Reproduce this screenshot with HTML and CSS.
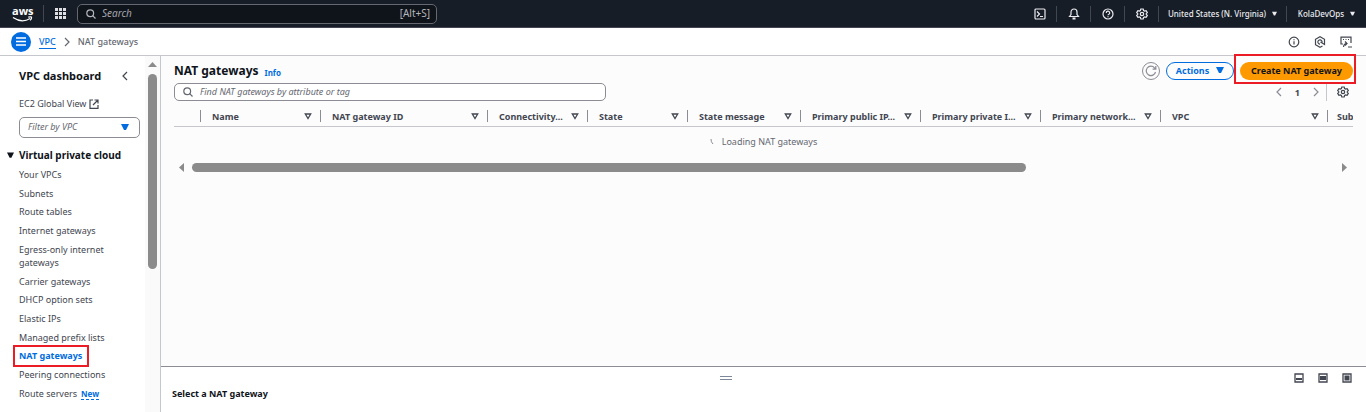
FILE: index.html
```html
<!DOCTYPE html>
<html lang="en">
<head>
<meta charset="utf-8">
<title>NAT gateways | VPC Console</title>
<link rel="stylesheet" href="styles.css">
</head>
<body>
<svg class="sprite" aria-hidden="true">
  <symbol id="search" viewBox="0 0 10 10"><circle cx="4.2" cy="4.2" r="3.4"/><path d="M6.7 6.7 9.5 9.5"/></symbol>
  <symbol id="gear" viewBox="0 0 12 12"><path d="M4.8 1h2.4l.4 1.5 1 .6 1.5-.5 1.2 2-1.1 1.1v.6l1.1 1.1-1.2 2-1.5-.5-1 .6L7.2 11H4.8l-.4-1.500-1-.6-1.500.5-1.200-2 1.100-1.100v-.6L.7 4.600l1.200-2 1.500.5 1-.6z"/><circle cx="6" cy="6" r="1.700"/></symbol>
  <symbol id="caret" viewBox="0 0 8 6"><path d="M0 0h8L5 6H3z"/></symbol>
  <symbol id="sort" viewBox="0 0 8 7"><path d="M1.300 1h5.400L4 5.500z"/></symbol>
  <symbol id="right" viewBox="0 0 6 10"><path d="M1 1l4 4-4 4"/></symbol>
  <symbol id="left" viewBox="0 0 6 10"><path d="M5 1 1 5l4 4"/></symbol>
</svg>
<div class="app">
  <header class="topbar">
    <a class="logo" href="#" aria-label="aws">
      <span>aws</span>
      <svg viewBox="0 0 22 6" class="smile"><path d="M1 1.500c6 4 13 4 18 1"/><path d="M17 1c2-.5 3.500-.3 3.500.3S20 3.500 19 4.500"/></svg>
    </a>
    <button class="apps" aria-label="Services"><svg viewBox="0 0 11 11"><path d="M0 0h3v3H0zM4 0h3v3H4zM8 0h3v3H8zM0 4h3v3H0zM4 4h3v3H4zM8 4h3v3H8zM0 8h3v3H0zM4 8h3v3H4zM8 8h3v3H8z"/></svg></button>
    <label class="top-search"><svg class="line i10"><use href="#search"/></svg><input type="text" placeholder="Search" aria-label="Search"><span>[Alt+S]</span></label>
    <nav class="tools">
      <button class="tool" aria-label="CloudShell"><svg class="line i12" viewBox="0 0 12 12"><rect x="1" y="1" width="10" height="10" rx="1"/><path d="M3 3.500 5.500 6 3 8.500M6 8.500h3"/></svg></button>
      <button class="tool" aria-label="Notifications"><svg class="line i12" viewBox="0 0 12 12"><path d="M1.500 8.500 3 6.500V4a3 3 0 0 1 6 0v2.500l1.500 2z"/><path d="M4.500 10.500h3" stroke-width="2"/></svg></button>
      <button class="tool" aria-label="Help"><svg class="line i12" viewBox="0 0 12 12"><circle cx="6" cy="6" r="5"/><path d="M4.300 5a1.700 1.700 0 1 1 2.500 1.300Q6 6.700 6 7.300M6 8.200v1"/></svg></button>
      <button class="tool" aria-label="Settings"><svg class="line i12"><use href="#gear"/></svg></button>
      <button class="tool region">United States (N. Virginia)<svg class="fill"><use href="#caret"/></svg></button>
      <button class="tool user">KolaDevOps<svg class="fill"><use href="#caret"/></svg></button>
    </nav>
  </header>
  <div class="crumbs">
    <button class="burger" aria-label="Toggle navigation"><svg viewBox="0 0 10 9"><path d="M0 1h10M0 4.500h10M0 8h10"/></svg></button>
    <a href="#">VPC</a>
    <svg class="line chevron"><use href="#right"/></svg>
    <span>NAT gateways</span>
    <div class="page-tools">
      <button aria-label="Info"><svg class="line i12" viewBox="0 0 12 12"><circle cx="6" cy="6" r="4.800"/><path d="M6 5.200v3.300M6 3.200v1"/></svg></button>
      <button aria-label="Diagnostics"><svg class="line i12" viewBox="0 0 12 12"><path d="M8.500 10 6 11.200 1.500 8.700V3.300L6 .8l4.500 2.500v5.200L6.500 6"/><path d="M8 6.500A2.100 2.100 0 1 0 6 8.100"/></svg></button>
      <button aria-label="Console"><svg class="line i12" viewBox="0 0 12 12"><path d="M3 8H1V1.200h10V7M3 3.500h1M5.500 3.500h1M8 3.500h1M8 11h4M3.500 11Q4 7.500 6.500 7.500M5 5.500l2 2-2 2"/></svg></button>
    </div>
  </div>
  <div class="body">
    <aside class="sidebar">
      <div class="side-content">
        <div class="side-title"><h2>VPC dashboard</h2><button aria-label="Collapse"><svg class="line chevron"><use href="#left"/></svg></button></div>
        <a class="global" href="#">EC2 Global View<svg class="line i10" viewBox="0 0 10 10"><path d="M4 1H1v8.300h8V6M5.500 1H9v3.500M9 1 4 6"/></svg></a>
        <button class="filter"><i>Filter by VPC</i><svg class="fill"><use href="#caret"/></svg></button>
        <h3><svg class="fill"><use href="#caret"/></svg>Virtual private cloud</h3>
        <ul>
          <li><a href="#">Your VPCs</a></li>
          <li><a href="#">Subnets</a></li>
          <li><a href="#">Route tables</a></li>
          <li><a href="#">Internet gateways</a></li>
          <li><a href="#">Egress-only internet<br>gateways</a></li>
          <li><a href="#">Carrier gateways</a></li>
          <li><a href="#">DHCP option sets</a></li>
          <li><a href="#">Elastic IPs</a></li>
          <li><a href="#">Managed prefix lists</a></li>
          <li class="current"><a href="#">NAT gateways</a></li>
          <li><a href="#">Peering connections</a></li>
          <li><a href="#">Route servers</a><span class="new">New</span></li>
        </ul>
      </div>
      <div class="vscroll"><svg viewBox="0 0 9 5"><path d="M0 5 4.500 0 9 5z"/></svg><div class="vthumb"></div></div>
    </aside>
    <div class="right">
      <main>
        <div class="title-row">
          <h1>NAT gateways</h1><a class="info" href="#">Info</a>
          <div class="actions">
            <button class="refresh" aria-label="Refresh"><svg class="line" viewBox="0 0 12 12"><path d="M10.500 7A4.700 4.700 0 1 1 9.500 2.800l1 1M10.800 1v3.200H7.600"/></svg></button>
            <button class="pill">Actions<svg class="fill"><use href="#caret"/></svg></button>
            <span class="marked"><button class="primary">Create NAT gateway</button></span>
          </div>
        </div>
        <div class="filter-row">
          <label class="find"><svg class="line i10"><use href="#search"/></svg><input type="text" placeholder="Find NAT gateways by attribute or tag" aria-label="Find NAT gateways"></label>
          <div class="pager">
            <button aria-label="Previous"><svg class="line chevron"><use href="#left"/></svg></button><b>1</b><button aria-label="Next"><svg class="line chevron"><use href="#right"/></svg></button>
            <button class="prefs" aria-label="Preferences"><svg class="line i12"><use href="#gear"/></svg></button>
          </div>
        </div>
        <div class="table-wrap">
          <table>
            <colgroup><col class="w-check"><col class="w-120"><col class="w-167"><col class="w-100"><col class="w-100"><col class="w-113"><col class="w-120"><col class="w-120"><col class="w-120"><col class="w-167"><col></colgroup>
            <thead><tr>
              <th></th>
              <th><div>Name<svg><use href="#sort"/></svg></div></th>
              <th><div>NAT gateway ID<svg><use href="#sort"/></svg></div></th>
              <th><div>Connectivity...<svg><use href="#sort"/></svg></div></th>
              <th><div>State<svg><use href="#sort"/></svg></div></th>
              <th><div>State message<svg><use href="#sort"/></svg></div></th>
              <th><div>Primary public IP...<svg><use href="#sort"/></svg></div></th>
              <th><div>Primary private I...<svg><use href="#sort"/></svg></div></th>
              <th><div>Primary network...<svg><use href="#sort"/></svg></div></th>
              <th><div>VPC<svg><use href="#sort"/></svg></div></th>
              <th><div>Sub</div></th>
            </tr></thead>
          </table>
        </div>
        <div class="loading"><svg viewBox="0 0 4 5"><path d="M1 0Q.8 3 3 5"/></svg>Loading NAT gateways</div>
        <div class="hscroll"><svg viewBox="0 0 5 9"><path d="M5 0v9L0 4.500z"/></svg><div class="htrack"><div class="hthumb"></div></div><svg viewBox="0 0 5 9"><path d="M0 0v9l5-4.500z"/></svg></div>
      </main>
      <section class="split">
        <div class="split-bar">
          <svg class="handle" viewBox="0 0 12 4"><path d="M0 .5h12M0 3.500h12"/></svg>
          <div class="sizes">
            <button aria-label="Small"><svg viewBox="0 0 10 10"><path class="frame" d="M1 1h8v8H1z"/><path d="M2 5h6v2H2z"/></svg></button>
            <button aria-label="Medium"><svg viewBox="0 0 10 10"><path class="frame" d="M1 1h8v8H1z"/><path d="M2 3h6v4H2z"/></svg></button>
            <button aria-label="Full"><svg viewBox="0 0 10 10"><path class="frame" d="M1 1h8v8H1z"/><path d="M2.500 2.500h5v5h-5z"/></svg></button>
          </div>
        </div>
        <h2>Select a NAT gateway</h2>
      </section>
    </div>
  </div>
</div>
</body>
</html>
```
FILE: styles.css
```css
*, *::before, *::after { box-sizing: border-box; }
body { margin: 0; font: 9px/13px "Noto Sans", "Open Sans", sans-serif; color: #424650; background: #fff; }
button, input { font: inherit; color: inherit; background: none; border: 0; padding: 0; margin: 0; }
button { display: flex; align-items: center; justify-content: center; flex: none; }
input { outline: 0; flex: 1; min-width: 0; }
input::placeholder { font-style: italic; color: #656871; opacity: 1; }
a { color: inherit; text-decoration: none; }
h1, h2, h3, ul { margin: 0; padding: 0; }
svg { display: block; flex: none; }
.sprite { position: absolute; width: 0; height: 0; }
.line { fill: none; stroke: currentColor; stroke-width: 1.2; }
.i10 { width: 10px; height: 10px; }
.i12 { width: 12px; height: 12px; }
.chevron { width: 6px; height: 10px; }
.fill { fill: currentColor; width: 8px; height: 6px; }
.app { display: flex; flex-direction: column; height: 100vh; overflow: hidden; }

.topbar { display: flex; align-items: center; flex: none; height: 28px; background: #161d26; border-bottom: 1px solid #424650; color: #ebebf0; }
.logo { width: 44px; height: 17px; padding-left: 12px; border-right: 1px solid #424650; font: bold 11px/11px "Open Sans", sans-serif; color: #fff; }
.logo span { display: block; height: 11px; }
.smile { width: 21px; height: 6px; fill: none; stroke: #fff; stroke-width: 1.3; }
.apps { width: 33px; }
.apps svg { width: 11px; height: 11px; fill: #dedee3; }
.top-search { display: flex; align-items: center; gap: 6px; width: 360px; height: 20px; padding: 0 6px 0 8px; border: 1px solid #656871; border-radius: 5px; background: #0f141a; font-size: 10px; color: #b4b4bb; }
.top-search input::placeholder { color: #a4a4ad; }
.tools { display: flex; align-items: center; margin-left: auto; }
.tool { width: 34px; height: 16px; border-right: 1px solid #424650; font-size: 8px; font-weight: 500; }
.tool.region { width: 128px; gap: 6px; }
.tool.user { width: 79px; gap: 6px; border: 0; }
.tool .fill { width: 5px; height: 5px; }

.crumbs { display: flex; align-items: center; flex: none; height: 28px; padding: 0 14px 0 11px; border-bottom: 1px solid #c6c6cd; font-weight: 500; color: #656871; }
.burger { width: 20px; height: 20px; border-radius: 50%; background: #006ce0; }
.burger svg { width: 10px; height: 9px; stroke: #fff; stroke-width: 1.3; }
.crumbs a { margin: 0 8px; color: #006ce0; border-bottom: 1px solid; }
.crumbs > span { margin-left: 8px; }
.page-tools { display: flex; gap: 14px; margin-left: auto; color: #424650; }

.body { display: flex; flex: 1; min-height: 0; }
.sidebar { display: flex; flex: none; width: 161px; border-right: 1px solid #c6c6cd; }
.side-content { flex: 1; padding: 13px 5px 0 19px; }
.side-title { display: flex; align-items: center; justify-content: space-between; padding-right: 12px; }
.side-title h2 { font-size: 11px; line-height: 14px; color: #0f141a; }
.global { display: flex; align-items: center; gap: 3px; margin-top: 14px; }
.filter { width: 100%; height: 21px; margin-top: 7px; padding: 0 10px 2px 8px; justify-content: space-between; border: 1px solid #8c8c94; border-radius: 5px; color: #656871; }
.filter .fill { color: #006ce0; }
.sidebar h3 { display: flex; align-items: center; gap: 5px; margin: 10px 0 0 -12px; font-size: 10px; line-height: 14px; color: #0f141a; }
.sidebar h3 .fill { width: 7px; }
.sidebar ul { display: flex; flex-direction: column; justify-content: space-between; height: 232px; margin-top: 6px; list-style: none; }
.current { position: relative; font-weight: bold; color: #006ce0; }
.current::after { content: ""; position: absolute; left: -6px; top: -4px; width: 76px; height: 22px; border: 2px solid #eb1c26; }
.new { display: inline-block; margin-left: 4px; font-size: 8px; line-height: 10px; font-weight: bold; color: #006ce0; border-bottom: 1px dashed; }
.vscroll { width: 15px; padding: 6px 3px 0; background: #fafafa; }
.vscroll svg { width: 9px; height: 5px; fill: #8b8b8b; }
.vthumb { height: 195px; margin-top: 7px; border-radius: 5px; background: #8b8b8b; }

.right { display: flex; flex-direction: column; flex: 1; min-width: 0; }
main { flex: 1; padding: 5px 13px 0; background: #fcfcfd; }
.title-row { display: flex; align-items: center; height: 20px; }
h1 { font-size: 12px; line-height: 18px; color: #0f141a; }
.info { margin: 2px 0 0 6px; font-size: 8px; font-weight: bold; color: #006ce0; }
.actions { display: flex; align-items: center; gap: 6px; margin-left: auto; }
.refresh { width: 18px; height: 18px; border: 1px solid #8c8c94; border-radius: 50%; color: #8c8c94; }
.refresh svg { width: 12px; height: 12px; }
.pill { width: 68px; height: 18px; gap: 7px; padding-bottom: 2px; border: 1px solid #006ce0; border-radius: 9px; font-weight: bold; color: #006ce0; }
.primary { width: 113px; height: 18px; padding-bottom: 2px; border-radius: 9px; background: #ff9900; font-weight: bold; color: #0f141a; }
.marked { position: relative; }
.marked::after { content: ""; position: absolute; inset: -8px -3px -4px -6px; border: 2px solid #eb1c26; }
.filter-row { display: flex; align-items: center; justify-content: space-between; margin-top: 2px; }
.find { display: flex; align-items: center; gap: 7px; width: 432px; height: 18px; padding: 0 8px; border: 1px solid #8c8c94; border-radius: 5px; background: #fff; color: #656871; }
.find input { padding-bottom: 2px; }
.pager { display: flex; align-items: center; gap: 13px; color: #8c8c94; }
.pager b { color: #424650; }
.prefs { height: 17px; margin-left: -6px; padding: 0 4px 0 10px; border-left: 1px solid #c6c6cd; color: #424650; }
.table-wrap { overflow: hidden; margin-top: 5px; border-bottom: 1px solid #c6c6cd; }
table { width: 100%; table-layout: fixed; border-collapse: collapse; }
th { position: relative; height: 20px; padding: 0; text-align: left; font-weight: bold; white-space: nowrap; }
th:not(:last-child)::after { content: ""; position: absolute; right: 0; top: 4px; height: 12px; border-right: 1px solid #8c8c94; }
th div { display: flex; align-items: center; justify-content: space-between; padding: 0 9px 0 11px; }
th:last-child div { padding: 0 0 0 9px; }
th svg { width: 8px; height: 7px; fill: none; stroke: #424650; stroke-width: 1.3; }
.w-check { width: 27px; }
.w-100 { width: 100px; }
.w-113 { width: 113px; }
.w-120 { width: 120px; }
.w-167 { width: 167px; }
.loading { display: flex; align-items: center; justify-content: center; gap: 8px; margin-top: 8px; color: #656871; }
.loading svg { width: 4px; height: 5px; fill: none; stroke: #8c8c94; }
.hscroll { display: flex; align-items: center; gap: 8px; margin-top: 15px; padding: 0 6px 0 5px; fill: #8b8b8b; }
.hscroll svg { width: 5px; height: 9px; }
.htrack { flex: 1; }
.hthumb { width: 73%; height: 9px; border-radius: 5px; background: #8b8b8b; }

.split { flex: none; height: 46px; padding: 0 14px 0 11px; border-top: 1px solid #8c8c94; background: #fff; }
.split-bar { display: flex; align-items: center; height: 22px; }
.handle { margin: 0 auto; width: 12px; height: 4px; stroke: #7d8998; }
.sizes { display: flex; gap: 14px; margin-left: 14px; }
.sizes svg { width: 10px; height: 10px; fill: #424650; }
.sizes .frame { fill: none; stroke: #424650; stroke-width: 1.3; }
.split h2 { margin-top: -2px; font-size: 9px; color: #0f141a; }
```
